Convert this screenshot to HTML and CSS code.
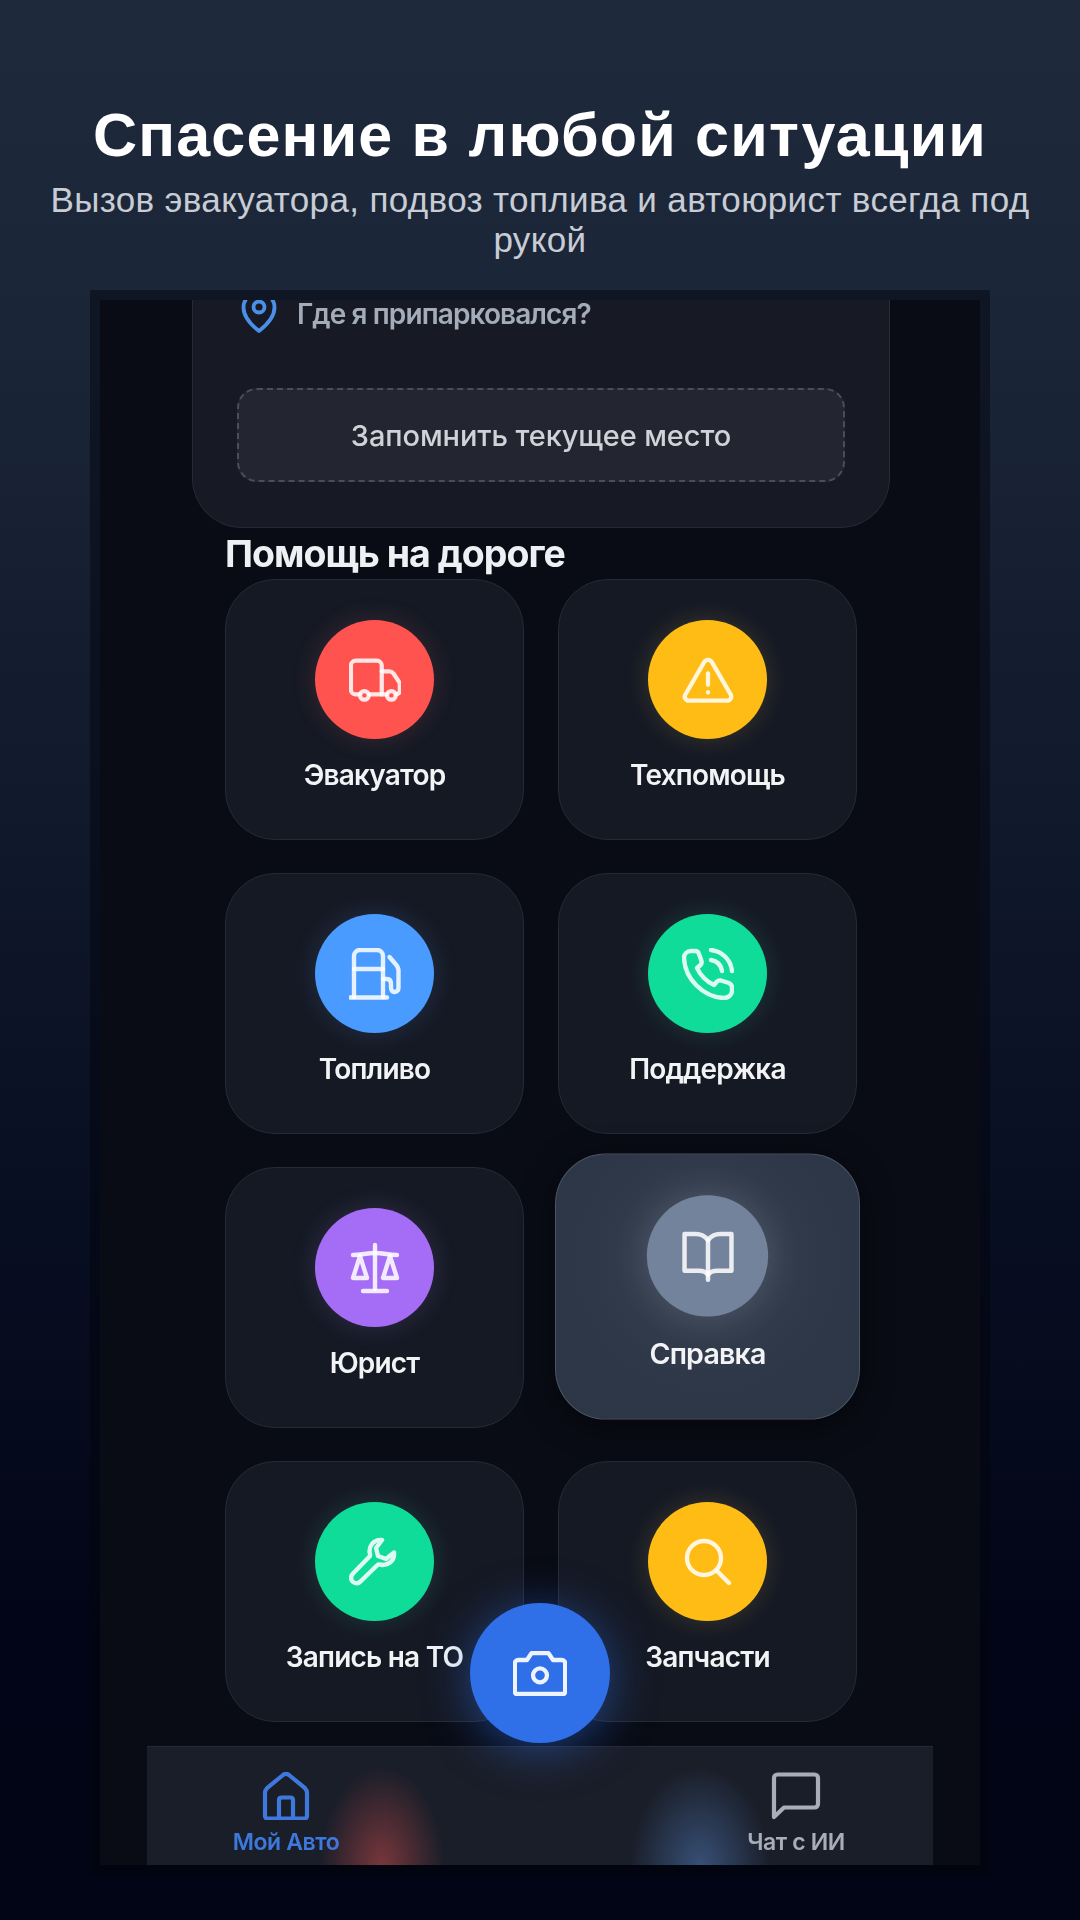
FILE: index.html
```html
<!DOCTYPE html>
<html lang="ru">
<head>
  <meta charset="UTF-8">
  <title>Спасение в любой ситуации</title>
  <link rel="stylesheet" href="styles.css">
</head>
<body>
  <header class="promo">
    <h1>Спасение в любой ситуации</h1>
    <p>Вызов эвакуатора, подвоз топлива и автоюрист всегда под рукой</p>
  </header>

  <div class="phone">
    <div class="screen">
      <section class="parking">
        <div class="parking-row">
          <svg class="pin" viewBox="0 0 36 44" fill="none" stroke="#4a8fe8" stroke-width="3.800" stroke-linejoin="round">
            <path d="M18 41C9 34 2.500 26 2.500 17.500a15.500 15.500 0 0 1 31 0C33.500 26 27 34 18 41z"/>
            <circle cx="18" cy="17" r="5.500"/>
          </svg>
          <span>Где я припарковался?</span>
        </div>
        <button class="remember">Запомнить текущее место</button>
      </section>

      <h2>Помощь на дороге</h2>

      <div class="grid">
        <div class="tile">
          <div class="disc red">
            <svg viewBox="0 0 54 44" class="icon"><path d="M11 37H7a5 5 0 0 1-5-5V7a5 5 0 0 1 5-5h22a5 5 0 0 1 5 5v30H21"/><path d="M34 13h8c2 0 3 .8 4 2l6 9c.6 1 .8 2 .8 3v6a4 4 0 0 1-4 4H49"/><path d="M34 37h5"/><circle cx="16" cy="38" r="4.500"/><circle cx="44" cy="38" r="4.500"/></svg>
          </div>
          <span class="tile-label">Эвакуатор</span>
        </div>
        <div class="tile">
          <div class="disc yellow">
            <svg viewBox="0 0 54 48" class="icon"><path d="M27 3c-1.800 0-3.200 1-4 2.500L3.500 39c-1.800 3 .3 6.500 3.700 6.500h39.600c3.400 0 5.500-3.500 3.700-6.500L31 5.500C30.200 4 28.800 3 27 3z"/><path d="M27 17v12"/><path d="M27 36.500v.5"/></svg>
          </div>
          <span class="tile-label">Техпомощь</span>
        </div>
        <div class="tile">
          <div class="disc blue">
            <svg viewBox="0 0 52 52" class="icon"><path d="M5 49V8a6 6 0 0 1 6-6h17a6 6 0 0 1 6 6v41"/><path d="M1 49.500h37"/><path d="M5 21h29"/><path d="M34 31h4c3 0 4 2 4 5v4c0 2.500 1.500 4 3.500 4s4-1.500 4-4V23c0-3-1-5-3-7l-6-7"/></svg>
          </div>
          <span class="tile-label">Топливо</span>
        </div>
        <div class="tile">
          <div class="disc green">
            <svg viewBox="0 0 52 52" class="icon"><path d="M13 3H9C5 3 2 6 2 10c1 21 19 39 40 40 4 0 8-3 8-7v-4c0-2-1-3-3-4l-8-2.500c-2-.5-3 0-4 1l-3 3.500c-7-3-14-10-17-17l3.500-3c1-1 1.500-2 1-4L17 6c-.5-2-2-3-4-3z"/><path d="M29 12c6 1 10 5 11 11"/><path d="M29 2c11 1 20 10 21 21"/></svg>
          </div>
          <span class="tile-label">Поддержка</span>
        </div>
        <div class="tile">
          <div class="disc purple">
            <svg viewBox="0 0 52 52" class="icon"><path d="M26 3v44"/><path d="M14 49h24"/><path d="M4 13c8 0 14-2 22-2s14 2 22 2"/><path d="M11 14 4 36h14z"/><path d="M41 14l-7 22h14z"/></svg>
          </div>
          <span class="tile-label">Юрист</span>
        </div>
        <div class="tile active">
          <div class="disc slate">
            <svg viewBox="0 0 52 52" class="icon"><path d="M26 10c-3-4-7-6-12-6H3v36h14c4 0 7 1 9 4 2-3 5-4 9-4h14V4H38c-5 0-9 2-12 6z"/><path d="M26 10v39"/></svg>
          </div>
          <span class="tile-label">Справка</span>
        </div>
        <div class="tile">
          <div class="disc green">
            <svg viewBox="0 0 52 52" class="icon"><path d="M33 4c-8-1-14 6-12 14 .2 1 .1 2-.7 2.800L4.500 37c-3 3-3 6-1 8.500 2.500 2.500 6 2.500 8.500-.5l16.200-15.800c.8-.8 1.800-1 2.800-.7 8 2 15-4 14-12L37 23l-8-3-2-8z"/></svg>
          </div>
          <span class="tile-label">Запись на ТО</span>
        </div>
        <div class="tile">
          <div class="disc yellow">
            <svg viewBox="0 0 52 52" class="icon"><circle cx="22" cy="22" r="17"/><path d="M35 35l12 12"/></svg>
          </div>
          <span class="tile-label">Запчасти</span>
        </div>
      </div>

      <nav class="tabbar">
        <div class="tab current">
          <svg viewBox="0 0 46 48" class="tab-icon"><path d="M2 44V21c0-2 .7-3.500 2-4.800L20 3c2-1.500 4-1.500 6 0l16 13.200c1.300 1.300 2 2.800 2 4.800v23c0 1.500-1 2.500-2.500 2.500h-37C3 46.500 2 45.500 2 44z"/><path d="M16 46V28c0-1.500 1-2.500 2.500-2.500h9c1.500 0 2.500 1 2.500 2.500v18"/></svg>
          <span>Мой Авто</span>
        </div>
        <div class="tab">
          <svg viewBox="0 0 50 48" class="tab-icon"><path d="M3 45V6c0-2 1.500-3.500 3.500-3.500h37c2 0 3.500 1.500 3.500 3.500v26c0 2-1.500 3.500-3.500 3.500H13z"/></svg>
          <span>Чат с ИИ</span>
        </div>
      </nav>

      <button class="fab">
        <svg viewBox="0 0 58 50"><path d="M4 47h50c1 0 2-1 2-2V14c0-2-1.500-3.500-3.500-3.500H43L38 3H20l-5 7.500H5.500C3.500 10.500 2 12 2 14v31c0 1 1 2 2 2z"/><circle cx="29" cy="27" r="7.500"/></svg>
      </button>
    </div>
  </div>
</body>
</html>
```

FILE: styles.css
```css
* {
  box-sizing: border-box;
}
body {
  width: 1080px;
  height: 1920px;
  margin: 0;
  padding-top: 96px;
  overflow: hidden;
  background: linear-gradient(180deg, #1e293b 0%, #1b2538 18%, #0b1226 55%, #020517 85%, #020515 100%);
  font-family: "Liberation Sans", Arial, sans-serif;
}

/* promo text above the phone */
.promo {
  padding: 0 30px;
  text-align: center;
}
.promo h1 {
  margin: 0 0 6px;
  color: #fff;
  font-size: 61px;
  line-height: 78px;
  font-weight: 700;
  letter-spacing: 1.2px;
}
.promo p {
  margin: 0;
  color: #c8ccd4;
  font-size: 35px;
  line-height: 40px;
  letter-spacing: 0.36px;
}

/* phone screenshot */
.phone {
  width: 900px;
  margin: 30px auto 0;
  border: 10px solid rgba(2, 4, 12, 0.45);
}
.screen {
  position: relative;
  height: 1565px;
  overflow: hidden;
  background: #090c15;
  font-family: Inter, Roboto, sans-serif;
  filter: blur(0.6px);
}

.parking {
  margin: 0 90px 0 92px;
  padding: 0 44px 45px;
  background: #171a24;
  border: 1px solid #262a35;
  border-top: none;
  border-radius: 0 0 50px 50px;
}
.parking-row {
  display: flex;
  align-items: flex-start;
  gap: 20px;
  height: 34px;
  margin-bottom: 54px;
  color: #a4acba;
  font-size: 28px;
  line-height: 28px;
  font-weight: 600;
  letter-spacing: -0.9px;
}
/* the pin is cut by the top of the screen, the page is scrolled */
.pin {
  width: 36px;
  height: 44px;
  margin: -10px 0 0 4px;
}
.remember {
  display: block;
  width: 100%;
  height: 94px;
  background: #232630;
  border: 2px dashed #4a4e59;
  border-radius: 20px;
  color: #d0d2d8;
  font-family: inherit;
  font-size: 29px;
  font-weight: 500;
  letter-spacing: -0.1px;
}

h2 {
  margin: 6px 0 5px 125px;
  color: #eef0f3;
  font-size: 37.500px;
  line-height: 40px;
  font-weight: 700;
  letter-spacing: -1px;
}

.grid {
  display: grid;
  grid-template-columns: 299px 299px;
  grid-auto-rows: 261px;
  column-gap: 34px;
  row-gap: 33px;
  margin-left: 125px;
}
.tile {
  display: flex;
  flex-direction: column;
  align-items: center;
  padding-top: 40px;
  background: #151924;
  border: 1px solid #262a35;
  border-radius: 50px;
}
.tile.active {
  background: radial-gradient(circle at 50% 40%, #3a4352 0%, #2e3747 60%, #2d3645 100%);
  border-color: #4c5564;
  transform: translateY(-11px) scale(1.02);
  box-shadow: 0 6px 30px rgba(0, 0, 0, 0.5);
}
.disc {
  display: flex;
  align-items: center;
  justify-content: center;
  width: 119px;
  height: 119px;
  border-radius: 50%;
}
.red { background: #ff5350; box-shadow: 0 0 26px rgba(255, 130, 130, 0.16); }
.yellow { background: #ffbc14; box-shadow: 0 0 26px rgba(255, 210, 90, 0.16); }
.blue { background: #4a9bff; box-shadow: 0 0 26px rgba(120, 175, 255, 0.16); }
.green { background: #10dc9a; box-shadow: 0 0 26px rgba(90, 230, 180, 0.16); }
.purple { background: #a56cf5; box-shadow: 0 0 26px rgba(190, 150, 255, 0.16); }
.slate { background: #74839c; box-shadow: 0 0 34px rgba(180, 195, 220, 0.22); }
.icon {
  width: 52px;
  height: 52px;
  fill: none;
  stroke: rgba(255, 255, 255, 0.86);
  stroke-width: 4.4;
  stroke-linecap: round;
  stroke-linejoin: round;
}
.tile-label {
  margin-top: 19px;
  color: #f2f3f5;
  font-size: 28px;
  line-height: 34px;
  font-weight: 600;
  letter-spacing: -0.8px;
  white-space: nowrap;
}

.tabbar {
  display: flex;
  justify-content: space-between;
  height: 120px;
  margin: 24px 47px 0;
  padding: 25px 77px 0 79px;
  background:
    radial-gradient(ellipse 62px 100px at 235px 120px, rgba(200, 75, 75, 0.55), transparent),
    radial-gradient(ellipse 70px 100px at 553px 120px, rgba(85, 130, 195, 0.5), transparent),
    #1a1e29;
  border-top: 1px solid #262a35;
}
.tab {
  display: flex;
  flex-direction: column;
  align-items: center;
  width: 120px;
  color: #a8adb8;
  font-size: 23px;
  font-weight: 600;
  letter-spacing: -0.4px;
}
.tab span {
  margin-top: 8px;
}
.tab.current {
  color: #3f78dd;
}
.tab-icon {
  width: 50px;
  height: 48px;
  fill: none;
  stroke: currentColor;
  stroke-width: 4.2;
  stroke-linejoin: round;
  stroke-linecap: round;
}

/* round camera button sits over the grid and the tab bar */
.fab {
  position: absolute;
  left: 370px;
  bottom: 122px;
  display: flex;
  align-items: center;
  justify-content: center;
  width: 140px;
  height: 140px;
  padding: 0;
  background: #2f6fe8;
  border: none;
  border-radius: 50%;
  box-shadow: 0 6px 46px rgba(47, 111, 232, 0.5);
}
.fab svg {
  width: 54px;
  height: 47px;
  fill: none;
  stroke: rgba(255, 255, 255, 0.92);
  stroke-width: 4.6;
  stroke-linejoin: round;
}
```
